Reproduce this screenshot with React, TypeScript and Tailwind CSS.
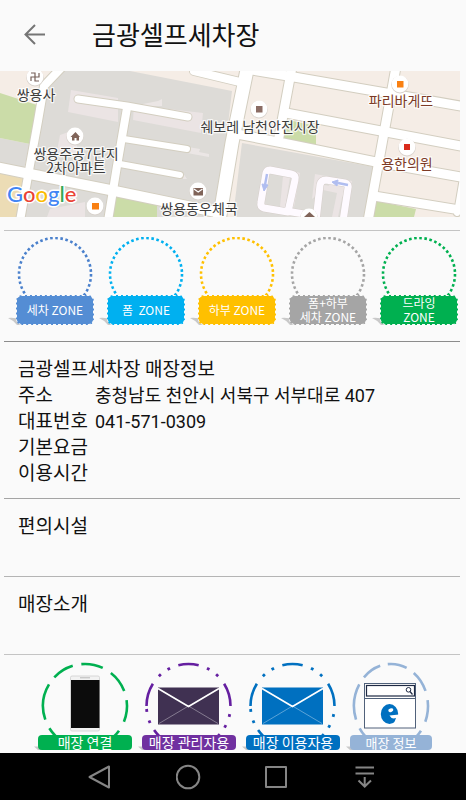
import { FC, ReactNode } from "react";

interface Road {
  d: string;
  w: number;
}

interface Zone {
  lines: string[];
  ring: string;
  bg: string;
}

interface Place {
  x: number;
  y: number;
  text: string;
  fill: string;
}

interface ActionProps {
  label: string;
  width: string;
  bg: string;
  text: string;
  children: ReactNode;
}

const roads: Road[] = [
  { d: "M64 -6L44 15L38 50L28 105L20 150", w: 8 },
  { d: "M-4 96L30 103L110 119L216 141", w: 10 },
  { d: "M127 37L117 95L108 150", w: 8 },
  { d: "M78 28L127 35L188 46", w: 7 },
  { d: "M124 68L187 78", w: 6 },
  { d: "M120 93L180 104", w: 6 },
  { d: "M194 0L244 12", w: 8 },
  { d: "M248 -6L232 72L219 150", w: 13 },
  { d: "M246 -2L294 6L386 22L466 36", w: 9 },
  { d: "M292 -4L279 66", w: 9 },
  { d: "M286 42L381 60L466 76", w: 9 },
  { d: "M232 62L283 72L376 91L466 107", w: 9 },
  { d: "M396 -4L368 150", w: 9 },
  { d: "M374 125L466 140", w: 9 },
  { d: "M463 107L457 142", w: 6 },
];

const loopRoads: Road[] = [
  { d: "M270 99L291 103Q296 104 295 109L288 141L264 137Q260 136 261 131L266 102Q267 99 270 99", w: 7 },
  { d: "M316 150L320 114Q321 109 326 109L345 112Q349 113 348 117L343 150", w: 7 },
  { d: "M286 140L310 144", w: 7 },
];

const places: Place[] = [
  { x: 36, y: 29, text: "쌍용사", fill: "#3c3c3c" },
  { x: 76, y: 88, text: "쌍용주공7단지", fill: "#3c3c3c" },
  { x: 76, y: 102, text: "2차아파트", fill: "#3c3c3c" },
  { x: 260, y: 61, text: "쉐보레 남천안전시장", fill: "#3c3c3c" },
  { x: 199, y: 143, text: "쌍용동우체국", fill: "#3c3c3c" },
  { x: 401, y: 35, text: "파리바게뜨", fill: "#7d3a25" },
  { x: 407, y: 98, text: "용한의원", fill: "#7d3a25" },
];

const pins = [
  [35, 6],
  [75, 65],
  [198, 120],
  [95, 135],
  [259, 38],
  [400, 13],
  [407, 76],
  [309, 146],
];

const zones: Zone[] = [
  { lines: ["세차 ZONE"], ring: "#4a80cc", bg: "bg-[#548dd4]" },
  { lines: ["폼  ZONE"], ring: "#00b0f0", bg: "bg-[#00b0f0]" },
  { lines: ["하부 ZONE"], ring: "#ffc000", bg: "bg-[#ffc000]" },
  { lines: ["폼+하부", "세차 ZONE"], ring: "#a5a5a5", bg: "bg-[#a5a5a5]" },
  { lines: ["드라잉", "ZONE"], ring: "#00b050", bg: "bg-[#00b050]" },
];

const info = [
  { label: "주소", value: "충청남도 천안시 서북구 서부대로 407" },
  { label: "대표번호", value: "041-571-0309" },
  { label: "기본요금", value: "" },
  { label: "이용시간", value: "" },
];

// degrees are measured clockwise from the top of the ring
const dashRing = [[-5, 25], [38, 69], [82, 112], [126, 140], [-47, -17], [-109, -59], [-140, -122]];
const dotRing = [[-14, 14], [58, 90], [-90, -58], [-140, -125], [132, 136]];
const dots = [28, 43, 103, 119, -28, -43, -96, -112];

const point = (cx: number, rx: number, deg: number) => {
  const a = (deg * Math.PI) / 180;
  return [cx + rx * Math.sin(a), 45 - 42 * Math.cos(a)];
};

const Ring: FC<{ cx: number; rx: number; color: string; dotted?: boolean }> = ({
  cx,
  rx,
  color,
  dotted,
}) => (
  <g>
    {(dotted ? dotRing : dashRing).map(([from, to]) => {
      const [x1, y1] = point(cx, rx, from);
      const [x2, y2] = point(cx, rx, to);
      return (
        <path
          key={from}
          d={`M${x1} ${y1}A${rx} 42 0 0 1 ${x2} ${y2}`}
          stroke={color}
          strokeWidth="2.6"
          fill="none"
        />
      );
    })}
    {dotted &&
      dots.map((deg) => {
        const [x, y] = point(cx, rx, deg);
        return (
          <rect
            key={deg}
            x={x - 1.4}
            y={y - 1.4}
            width="2.8"
            height="2.8"
            fill={color}
            transform={`rotate(${deg} ${x} ${y})`}
          />
        );
      })}
  </g>
);

const StoreMap = () => (
  <svg
    viewBox="0 0 460 146"
    className="block w-full font-['Noto_Sans_CJK_KR',sans-serif]"
    role="img"
    aria-label="지도"
  >
    <rect width="460" height="146" fill="#f5ede6" />
    <path d="M64 0H130L232 20L217 146H22L38 50L46 14Z" fill="#dddbd7" />
    <path d="M0 67L30 73L24 98L0 93Z" fill="#dddbd7" />
    <path d="M0 22L37 34L30 73L0 67Z" fill="#cbdca8" />
    <path d="M0 102L25 108L17 146H0Z" fill="#ecdcb5" />
    <path d="M115 124L157 131V146H112Z" fill="#cbdca8" />
    <path
      d="M71 19L118 27V51L68 41Z M134 34L203 42L201 62L133 49Z M60 64L77 58V84L57 80Z M50 138L85 131V146H47Z"
      fill="#ebe4e4"
    />
    <path
      d="M143 33L158 30L162 28V35H143Z M188 76L200 78L199 81L209 83V86L187 82Z M183 102L187 108H183Z"
      fill="#ebe6e5"
    />
    <path d="M242 72L374 96L365 146H233Z" fill="#dddbd7" />
    <path d="M284 48L316 55V74L281 68Z M376 130L416 138L414 146H373Z" fill="#cbdca8" />
    <path d="M283 105L290 106L285 137L280 136Z M297 101L300 102L294 136L292 135Z M315 103L352 110L348 130L325 111L316 125L312 128Z M324 114L344 117L338 146H332L337 122L323 119Z" fill="#ebe4e4" />

    <g fill="none" strokeLinejoin="round" strokeLinecap="round">
      {roads.map((r) => (
        <path key={r.d} d={r.d} stroke="#d3cec0" strokeWidth={r.w + 2} />
      ))}
      {roads.map((r) => (
        <path key={r.d} d={r.d} stroke="#fff" strokeWidth={r.w} />
      ))}
      {loopRoads.map((r) => (
        <path key={r.d} d={r.d} stroke="#d6cfcb" strokeWidth={r.w + 1} />
      ))}
      {loopRoads.map((r) => (
        <path key={r.d} d={r.d} stroke="#fefaff" strokeWidth={r.w} />
      ))}
    </g>

    <g fill="#b0bdf0" stroke="#b0bdf0">
      <path d="M267 103L265 114" strokeWidth="2.4" />
      <path d="M262 113L268 114L264 120Z" />
      <path d="M348 114L338 112" strokeWidth="2.4" />
      <path d="M338 109L337 115L332 111Z" />
    </g>

    {pins.map(([x, y]) => (
      <g key={x}>
        <circle cx={x} cy={y + 0.6} r="8.8" fill="#d8d2cc" />
        <circle cx={x} cy={y} r="8.4" fill="#fff" />
      </g>
    ))}
    <path d="M31 10V6H39V2M31 2H35V10H39" fill="none" stroke="#77615a" strokeWidth="1.2" />
    <path
      d="M70.5 66L75.5 61L80 66H79V69.500H76.500V67H74.500V69.500H72V66Z"
      fill="#806459"
    />
    <rect x="193.5" y="117" width="9.5" height="7.5" fill="#806459" />
    <path d="M194 118L198.2 121L202.5 118" fill="none" stroke="#fff" strokeWidth="1.2" />
    <rect x="92" y="132" width="7" height="6.5" fill="#f98012" />
    <rect x="256" y="35" width="6.5" height="6.5" fill="#8b6d65" />
    <rect x="397" y="10" width="6.5" height="6.5" fill="#f98012" />
    <rect x="404" y="73" width="6" height="6" fill="#d92b1c" />
    <path d="M304 146L309.5 141L315 146Z" fill="#806459" />

    <g
      fontSize="14"
      textAnchor="middle"
      stroke="#fff"
      strokeWidth="2.5"
      strokeLinejoin="round"
      strokeOpacity="0.8"
      paintOrder="stroke"
    >
      {places.map((p) => (
        <text key={p.text} x={p.x} y={p.y} fill={p.fill}>
          {p.text}
        </text>
      ))}
    </g>

    <text
      x="7"
      y="131"
      fontSize="22"
      fontWeight="500"
      fontFamily="Lato, sans-serif"
      stroke="#fff"
      strokeWidth="3"
      strokeLinejoin="round"
      paintOrder="stroke"
    >
      <tspan fill="#4285f4">G</tspan>
      <tspan fill="#ea4335">o</tspan>
      <tspan fill="#fbbc05">o</tspan>
      <tspan fill="#4285f4">g</tspan>
      <tspan fill="#34a853">l</tspan>
      <tspan fill="#ea4335">e</tspan>
    </text>
  </svg>
);

const ZoneBadge: FC<{ zone: Zone }> = ({ zone }) => (
  <li className="relative flex w-[78px] flex-col">
    <svg viewBox="0 0 78 58" className="block w-full">
      <circle
        cx="39"
        cy="37"
        r="36"
        fill="none"
        stroke={zone.ring}
        strokeWidth="2.6"
        strokeDasharray="2.6 2.54"
      />
    </svg>
    <svg viewBox="0 0 14 8" className="absolute bottom-0 -left-2 h-2 w-3.5">
      <path d="M0 1Q6 0 14 3V8H9Q5 3 0 1Z" fill="#c9c9c9" />
    </svg>
    <p
      className={`relative flex h-[30px] flex-col items-center justify-center rounded-md border border-dashed border-[#fafafa] text-[12px] leading-[14px] whitespace-pre text-white ${zone.bg}`}
    >
      {zone.lines.map((line) => (
        <span key={line}>{line}</span>
      ))}
    </p>
  </li>
);

const Action: FC<ActionProps> = ({ label, width, bg, text, children }) => (
  <button className={`relative flex flex-col ${width}`}>
    {children}
    <svg viewBox="0 0 8 4" className="absolute bottom-0 -left-1 h-1 w-2">
      <path d="M0 0.500H8V4H4Q2 2 0 0.500Z" fill="#c9c9c9" />
    </svg>
    <span
      className={`relative flex h-[15px] w-full items-center justify-center rounded-sm whitespace-nowrap text-white ${bg} ${text}`}
    >
      {label}
    </span>
  </button>
);

const Envelope: FC<{ fill: string }> = ({ fill }) => (
  <g>
    <rect x="16" y="26.5" width="61" height="37" fill={fill} />
    <path
      d="M17 62.500L46.500 45L76 62.500"
      fill="none"
      stroke="#fff"
      strokeWidth="0.6"
      strokeOpacity="0.6"
    />
    <path d="M16 27.500L46.500 45.500L77 27.500" fill="none" stroke="#fff" strokeWidth="1.6" />
  </g>
);

const App = () => {
  return (
    <div className="flex min-h-screen flex-col bg-[#fafafa] font-[Roboto,'Noto_Sans_CJK_KR',sans-serif] text-[#111]">
      <header className="flex h-[71px] items-center gap-[46px] pl-[23px]">
        <button aria-label="뒤로">
          <svg
            viewBox="0 0 23 23"
            className="size-[23px]"
            fill="none"
            stroke="#757575"
            strokeWidth="2"
          >
            <path d="M22 10.5H2.5M12 1L2.5 10.5L12 20" />
          </svg>
        </button>
        <h1 className="text-[26px] leading-8">금광셀프세차장</h1>
      </header>

      <main className="flex flex-col">
        <div className="pr-1.5">
          <StoreMap />
        </div>

        <div className="mt-[13px] mr-1.5 ml-1 border-t border-[#c4c4c4]" />
        <ul className="flex h-[110px] items-start justify-center gap-[13px] pt-[6px] pl-2 font-['Noto_Sans_CJK_KR',sans-serif]">
          {zones.map((zone) => (
            <ZoneBadge key={zone.ring} zone={zone} />
          ))}
        </ul>

        <section className="mr-1.5 ml-1 border-t border-[#8c8c8c] px-3.5 pt-[15px] pb-[11px] text-[19px] leading-[26px]">
          <h2>금광셀프세차장 매장정보</h2>
          <dl>
            {info.map((row) => (
              <div key={row.label} className="flex h-[26px]">
                <dt className="w-[77px]">{row.label}</dt>
                <dd className="text-[18px]">{row.value}</dd>
              </div>
            ))}
          </dl>
        </section>

        <section className="mr-1.5 ml-1 h-[78px] border-t border-[#a4a4a4] px-3.5 pt-[15px] text-[19px] leading-[26px]">
          <h2>편의시설</h2>
        </section>
        <section className="mr-1.5 ml-1 h-[78px] border-t border-[#b4b4b4] px-3.5 pt-[15px] text-[19px] leading-[26px]">
          <h2>매장소개</h2>
        </section>

        <div className="mr-1.5 ml-1 border-t border-[#c4c4c4]" />
        <div className="flex items-start justify-center gap-2.5 pt-1.5 pb-[3px] pl-1 font-['Noto_Sans_CJK_KR',sans-serif]">
          <Action label="매장 연결" width="w-[94px]" bg="bg-[#00b050]" text="text-[14px]">
            <svg viewBox="0 0 94 74" className="block w-full">
              <Ring cx={47} rx={42} color="#00b050" />
              <rect
                x="32.5"
                y="15"
                width="29"
                height="55"
                rx="1.5"
                fill="#f2f2f2"
                stroke="#cfcfcf"
                strokeWidth="0.8"
              />
              <rect x="33" y="19" width="28.5" height="48" fill="#0c0c0c" />
              <path d="M42 16.800H52" stroke="#aaa" strokeWidth="0.8" />
            </svg>
          </Action>
          <Action label="매장 관리자용" width="w-[94px]" bg="bg-[#7030a0]" text="text-[14px]">
            <svg viewBox="0 0 94 74" className="block w-full">
              <Ring cx={46.5} rx={42} color="#651fa0" dotted />
              <Envelope fill="#403152" />
            </svg>
          </Action>
          <Action label="매장 이용자용" width="w-[94px]" bg="bg-[#0070c0]" text="text-[14px]">
            <svg viewBox="0 0 94 74" className="block w-full">
              <Ring cx={46.5} rx={42} color="#0070c0" dotted />
              <Envelope fill="#0070c0" />
            </svg>
          </Action>
          <Action label="매장 정보" width="w-[82px]" bg="bg-[#95b3d7]" text="text-[13px]">
            <svg viewBox="0 0 82 74" className="block w-full">
              <Ring cx={41} rx={37} color="#95b3d7" />
              <rect x="14.5" y="22.5" width="51" height="44.5" fill="#fff" stroke="#50617a" />
              <rect
                x="16.5"
                y="24.5"
                width="48"
                height="10.5"
                fill="#fff"
                stroke="#1f2a44"
                strokeWidth="1.2"
              />
              <path d="M14.5 37.500H65.500" stroke="#50617a" />
              <circle cx="58.5" cy="28.8" r="2.3" fill="none" stroke="#1f2a44" />
              <path d="M60 30.500L62.500 33.500" stroke="#1f2a44" strokeWidth="1.2" />
              <ellipse cx="39.5" cy="53" rx="8.7" ry="10" fill="#0070c0" />
              <ellipse cx="40.8" cy="49.2" rx="2.6" ry="1.8" fill="#fff" transform="rotate(-20 40.8 49.2)" />
              <path d="M39.5 54.5L49 53.5V63L44.500 61L46 57Q41.500 58.500 39.500 54.500Z" fill="#fff" />
            </svg>
          </Action>
        </div>
      </main>

      <nav className="mt-auto flex h-[47px] items-center justify-center bg-black">
        <button aria-label="이전" className="flex w-22 justify-center">
          <svg
            viewBox="0 0 26 26"
            className="size-[26px]"
            fill="none"
            stroke="#858585"
            strokeWidth="2"
            strokeLinejoin="round"
          >
            <path d="M1.5 13L21 2.5V23.5Z" />
          </svg>
        </button>
        <button aria-label="홈" className="flex w-22 justify-center">
          <svg
            viewBox="0 0 26 26"
            className="size-[26px]"
            fill="none"
            stroke="#858585"
            strokeWidth="2"
          >
            <circle cx="12" cy="13" r="11.3" />
          </svg>
        </button>
        <button aria-label="최근 앱" className="flex w-22 justify-center">
          <svg
            viewBox="0 0 26 26"
            className="size-[26px]"
            fill="none"
            stroke="#858585"
            strokeWidth="2"
            strokeLinejoin="round"
          >
            <rect x="2" y="3" width="20" height="20" />
          </svg>
        </button>
        <button aria-label="알림창" className="flex w-22 justify-center">
          <svg
            viewBox="0 0 26 26"
            className="size-[26px]"
            fill="none"
            stroke="#858585"
            strokeWidth="2"
          >
            <path d="M3.5 3.5H22M3.5 9.5H22M12.7 13V22.5M6.5 16.5L12.7 22.5L19 16.5" />
          </svg>
        </button>
      </nav>
    </div>
  );
};

export default App;
